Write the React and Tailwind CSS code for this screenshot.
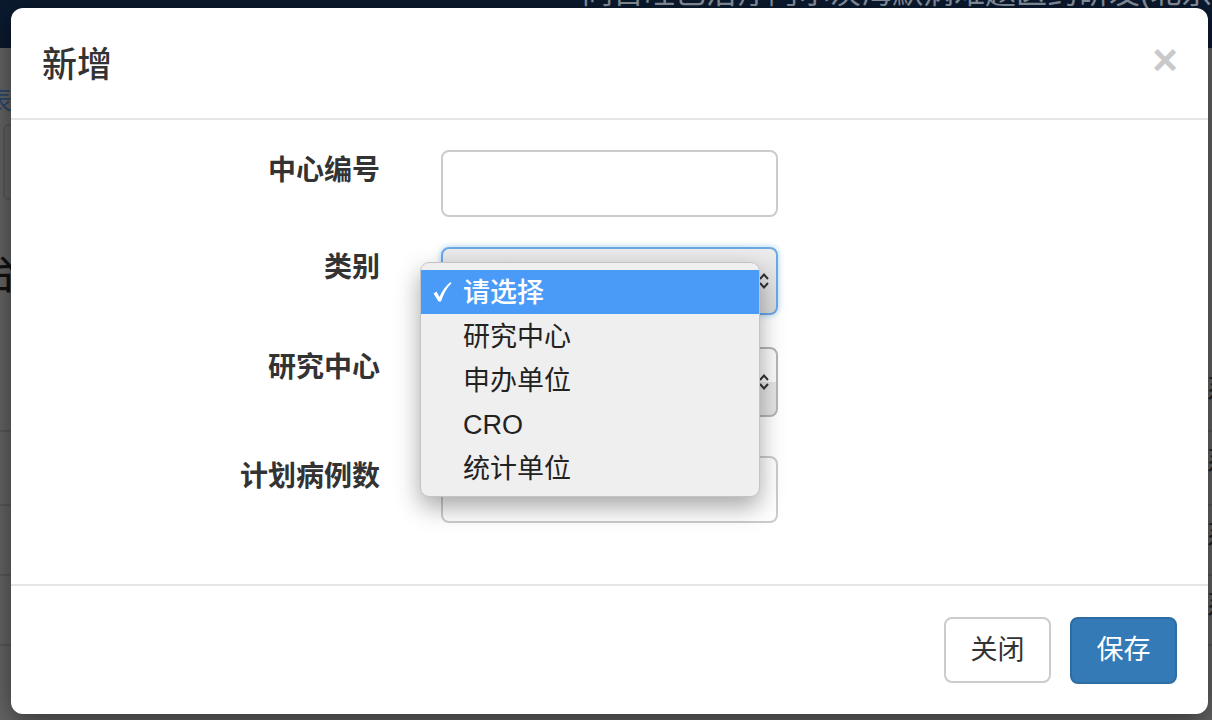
import React from "react";

const FONT = { fontFamily: '"Liberation Sans", "Noto Sans CJK SC", sans-serif' };

function Arrows() {
  return (
    <svg width="12" height="18" viewBox="0 0 12 18" className="shrink-0">
      <path d="M2 7 L6 2.5 L10 7" fill="none" stroke="#333" strokeWidth="2" />
      <path d="M2 11 L6 15.5 L10 11" fill="none" stroke="#333" strokeWidth="2" />
    </svg>
  );
}

function Check() {
  return (
    <svg width="20" height="22" viewBox="0 0 20 22" className="shrink-0">
      <path
        d="M1.5 12.5 L4.5 10.5 L7.5 16 C10 10 13.5 5 18.5 1 L19.5 2.2 C15 6.5 11.5 12.5 9 20.5 L6.5 20.5 Z"
        fill="#fff"
      />
    </svg>
  );
}

function Row({ label, children, className }) {
  return (
    <div className={"flex items-start " + (className || "")}>
      <div className="w-[369px] pt-[7px] text-right text-[28px] leading-[28px] font-bold text-[#333]">
        {label}
      </div>
      <div className="ml-[61px] w-[337px]">{children}</div>
    </div>
  );
}

export default function App() {
  const items = ["研究中心", "申办单位", "CRO", "统计单位"];
  return (
    <div className="relative w-[1212px] h-[720px] overflow-hidden bg-[#666666]" style={FONT}>
      {/* background page (dimmed) */}
      <div className="h-[48px] bg-[#0b1a2f] overflow-hidden">
        <div className="mt-[-24px] pl-[582px] whitespace-nowrap text-[31px] leading-[34px] text-[#8a93a0]">
          同首旺已治疗阿尔茨海默病难题医药研发(北京)有限公司
        </div>
      </div>
      <div className="flex flex-col">
        <div className="h-[40px] pt-[40px] text-[26px] leading-[26px] text-[#2c4870] ml-[-14px]">表</div>
        <div className="mt-[36px] ml-[3px] h-[76px] w-[300px] rounded-[6px] border-2 border-[#5a5a5a]" />
        <div className="mt-[50px] ml-[-26px] text-[44px] leading-[48px] text-[#111]">台</div>
        <div className="mt-[62px] h-[72px] border-b-2 border-[#5a5a5a] flex justify-end">
          <span className="mr-[-22px] text-[28px] leading-[60px] text-[#222]">系</span>
        </div>
        <div className="h-[74px] border-b-2 border-[#5a5a5a] flex justify-end">
          <span className="mr-[-22px] text-[28px] leading-[60px] text-[#222]">系</span>
        </div>
        <div className="h-[70px] border-b-2 border-[#5a5a5a] flex justify-end">
          <span className="mr-[-22px] text-[28px] leading-[60px] text-[#222]">系</span>
        </div>
        <div className="h-[70px] border-b-2 border-[#5a5a5a] flex justify-end">
          <span className="mr-[-22px] text-[28px] leading-[60px] text-[#222]">系</span>
        </div>
        <div className="pl-[178px] pt-[20px] text-[30px] leading-[34px] text-[#222] whitespace-nowrap">
          赔涂医疗研发(北京)有限公司
        </div>
      </div>

      {/* modal */}
      <div className="absolute inset-0 pl-[11px] pt-[8px]">
        <div className="w-[1197px] h-[706px] bg-white rounded-[12px] shadow-[0_8px_30px_rgba(0,0,0,0.5)] flex flex-col">
          <div className="h-[112px] shrink-0 border-b-2 border-[#e5e5e5] flex items-center justify-between pl-[31px] pr-[30px]">
            <div className="mt-[3px] text-[35px] leading-[40px] font-medium text-[#333]">新增</div>
            <div className="mb-[6px] text-[44px] leading-[40px] font-bold text-[#c9c9c9]">×</div>
          </div>
          <div className="flex-1 border-b-2 border-[#e5e5e5] pt-[30px] flex flex-col">
            <Row label="中心编号">
              <div className="h-[67px] rounded-[8px] border-2 border-[#cccccc] bg-white" />
            </Row>
            <Row label="类别" className="mt-[30px]">
              <div className="h-[68px] rounded-[8px] border-2 border-[#6aa9e6] bg-[linear-gradient(#ececec,#dadada)] shadow-[0_0_6px_rgba(102,175,233,0.6)] flex items-center justify-end pr-[6px]">
                <Arrows />
              </div>
            </Row>
            <Row label="研究中心" className="mt-[32px]">
              <div className="h-[70px] rounded-[8px] border-2 border-[#b5b5b5] bg-[linear-gradient(#fafafa_50%,#e4e4e4_50%)] flex items-center justify-end pr-[6px]">
                <Arrows />
              </div>
            </Row>
            <Row label="计划病例数" className="mt-[39px]">
              <div className="h-[67px] rounded-[8px] border-2 border-[#cccccc] bg-white" />
            </Row>
          </div>
          <div className="h-[128px] shrink-0 flex items-center justify-end gap-[19px] pr-[31px]">
            <button className="w-[107px] h-[66px] rounded-[8px] border-2 border-[#cccccc] bg-white text-[27px] text-[#333]">
              关闭
            </button>
            <button className="w-[107px] h-[67px] rounded-[8px] border-2 border-[#2e6da4] bg-[#337ab7] text-[27px] text-white">
              保存
            </button>
          </div>
        </div>
      </div>

      {/* native select dropdown */}
      <div className="absolute left-[420px] top-[262px] w-[340px] h-[235px] rounded-[9px] bg-[#efefef] border border-[#c4c4c4] shadow-[0_10px_24px_rgba(0,0,0,0.35)] pt-[7px] overflow-hidden">
        <div className="h-[44px] bg-[#4a9bf7] flex items-center text-white">
          <div className="w-[42px] pl-[11px] flex items-center">
            <Check />
          </div>
          <span className="pt-[3px] text-[27px] leading-[27px] font-medium">请选择</span>
        </div>
        {items.map((t) => (
          <div key={t} className="h-[44px] pt-[3px] flex items-center pl-[42px] text-[27px] leading-[27px] text-[#222]">
            {t}
          </div>
        ))}
      </div>
    </div>
  );
}
